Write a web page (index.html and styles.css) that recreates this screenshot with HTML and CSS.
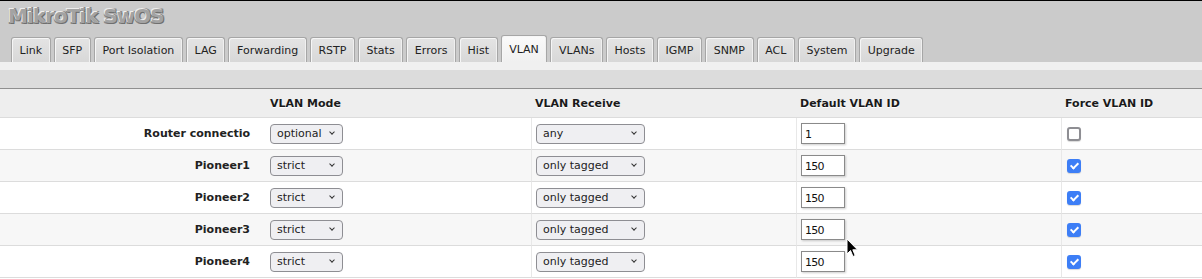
FILE: index.html
```html
<!DOCTYPE html>
<html lang="en">
<head>
    <meta charset="UTF-8">
    <meta name="viewport" content="width=device-width, initial-scale=1.0">
    <title>MikroTik SwOS - VLAN</title>
    <link rel="stylesheet" href="styles.css">
</head>
<body>
    <div class="top">
        <h1 class="logo">MikroTik SwOS</h1>
        <ul class="tabs">
            <li><a href="#">Link</a></li>
            <li><a href="#">SFP</a></li>
            <li><a href="#">Port Isolation</a></li>
            <li><a href="#">LAG</a></li>
            <li><a href="#">Forwarding</a></li>
            <li><a href="#">RSTP</a></li>
            <li><a href="#">Stats</a></li>
            <li><a href="#">Errors</a></li>
            <li><a href="#">Hist</a></li>
            <li class="active"><a href="#">VLAN</a></li>
            <li><a href="#">VLANs</a></li>
            <li><a href="#">Hosts</a></li>
            <li><a href="#">IGMP</a></li>
            <li><a href="#">SNMP</a></li>
            <li><a href="#">ACL</a></li>
            <li><a href="#">System</a></li>
            <li><a href="#">Upgrade</a></li>
        </ul>
    </div>
    <div class="strip"></div>
    <div class="toolbar"></div>

    <table class="grid">
        <colgroup>
            <col class="c-name">
            <col class="c-mode">
            <col class="c-recv">
            <col class="c-id">
            <col>
        </colgroup>
        <thead>
            <tr>
                <th></th>
                <th>VLAN Mode</th>
                <th>VLAN Receive</th>
                <th>Default VLAN ID</th>
                <th>Force VLAN ID</th>
            </tr>
        </thead>
        <tbody>
            <tr>
                <td class="name">Router connectio</td>
                <td><span class="sel mode"><select><option>optional</option><option>strict</option></select></span></td>
                <td><span class="sel recv"><select><option>any</option><option>only tagged</option></select></span></td>
                <td><input type="text" class="vid" value="1"></td>
                <td><input type="checkbox" class="force"></td>
            </tr>
            <tr>
                <td class="name">Pioneer1</td>
                <td><span class="sel mode"><select><option>strict</option></select></span></td>
                <td><span class="sel recv"><select><option>only tagged</option></select></span></td>
                <td><input type="text" class="vid" value="150"></td>
                <td><input type="checkbox" class="force" checked></td>
            </tr>
            <tr>
                <td class="name">Pioneer2</td>
                <td><span class="sel mode"><select><option>strict</option></select></span></td>
                <td><span class="sel recv"><select><option>only tagged</option></select></span></td>
                <td><input type="text" class="vid" value="150"></td>
                <td><input type="checkbox" class="force" checked></td>
            </tr>
            <tr>
                <td class="name">Pioneer3</td>
                <td><span class="sel mode"><select><option>strict</option></select></span></td>
                <td><span class="sel recv"><select><option>only tagged</option></select></span></td>
                <td><input type="text" class="vid" value="150"></td>
                <td><input type="checkbox" class="force" checked></td>
            </tr>
            <tr>
                <td class="name">Pioneer4</td>
                <td><span class="sel mode"><select><option>strict</option></select></span></td>
                <td><span class="sel recv"><select><option>only tagged</option></select></span></td>
                <td><input type="text" class="vid" value="150"></td>
                <td><input type="checkbox" class="force" checked></td>
            </tr>
        </tbody>
    </table>

    <!-- mouse pointer from the screenshot -->
    <svg class="pointer" width="13" height="20" viewBox="0 0 13 20">
        <path d="M1 1 L1 16 L4.5 12.5 L7 18.5 L9.2 17.5 L6.8 11.8 L11.5 11.8 Z" fill="#000" stroke="#fff" stroke-width="1"/>
    </svg>
</body>
</html>
```

FILE: styles.css
```css
* {
    box-sizing: border-box;
}

body {
    margin: 0;
    font-family: "DejaVu Sans", Verdana, sans-serif;
    font-size: 11px;
    color: #222;
    background-color: #fff;
    position: relative;
}

.top {
    background-color: #cbcbcb;
    border-top: 1px solid #000;
    padding-top: 3px;
}

.logo {
    margin: 0;
    padding-left: 8px;
    font-size: 20px;
    line-height: 24px;
    letter-spacing: -1px;
    font-weight: bold;
    color: #a3a3a3;
    text-shadow: -1px -1px 0 #eee, 1px 1px 0 #6f6f6f, 1px -1px 0 #888, -1px 1px 0 #888;
}

.tabs {
    list-style: none;
    margin: 7px 0 0;
    padding: 0 0 0 11px;
    height: 27px;
    display: flex;
    align-items: flex-end;
    gap: 3px;
}

.tabs a {
    display: block;
    height: 25px;
    line-height: 25px;
    padding: 0 7.6px;
    color: #222;
    text-decoration: none;
    border: 1px solid #a6a6a6;
    border-bottom: none;
    border-radius: 3px 3px 0 0;
    background: linear-gradient(#e4e4e4, #d8d8d8);
    box-shadow: inset 1px 1px 0 #f6f6f6, inset -1px 0 0 #f0f0f0;
}

.tabs .active a {
    height: 27px;
    line-height: 28px;
    background: linear-gradient(#fafafa, #f0f0f0);
}

.strip {
    height: 8px;
    background-color: #f0f0f0;
}

.toolbar {
    height: 19px;
    background-color: #dcdcdc;
    border-bottom: 1px solid #8f8f8f;
}

.grid {
    width: 100%;
    table-layout: fixed;
    border-collapse: separate;
    border-spacing: 0;
}

.c-name { width: 266px; }
.c-mode { width: 265px; }
.c-recv { width: 265px; }
.c-id { width: 265px; }

.grid th,
.grid td {
    padding: 0 0 0 4px;
    border-bottom: 1px solid #dcdcdc;
    text-align: left;
    white-space: nowrap;
}

.grid th {
    height: 29px;
    background-color: #eee;
    font-weight: bold;
    color: #1a1a1a;
    text-shadow: 0 1px 0 #fff;
}

.grid td {
    height: 32px;
}

.grid tbody tr:nth-child(even) td {
    background-color: #f7f7f7;
}

.grid td:nth-child(n+3) {
    border-left: 1px solid #e8e8e8;
}

.grid td.name {
    text-align: right;
    padding-right: 16px;
    font-weight: bold;
}

.sel {
    display: inline-block;
    position: relative;
    vertical-align: middle;
}

.sel select {
    appearance: none;
    -webkit-appearance: none;
    height: 20px;
    padding: 0 0 0 6px;
    font-family: inherit;
    font-size: 11px;
    color: #222;
    background-color: #efeff2;
    border: 1px solid #8e8e93;
    border-radius: 4px;
}

.sel::after {
    content: "";
    position: absolute;
    right: 9px;
    top: 6px;
    width: 3px;
    height: 3px;
    border-right: 1.5px solid #333;
    border-bottom: 1.5px solid #333;
    transform: rotate(45deg);
    pointer-events: none;
}

.mode select { width: 73px; }
.recv select { width: 109px; }

.vid {
    width: 44px;
    height: 21px;
    padding: 1px 3px 0;
    font-family: inherit;
    font-size: 11px;
    letter-spacing: -0.8px;
    color: #111;
    border: 1px solid #8a8a8a;
    box-shadow: 1px 1px 2px rgba(0, 0, 0, 0.2);
    vertical-align: middle;
}

.force {
    appearance: none;
    -webkit-appearance: none;
    position: relative;
    width: 14px;
    height: 14px;
    margin: 0 0 0 1px;
    border: 2px solid #8e8e93;
    border-radius: 3px;
    background-color: #fff;
    box-shadow: 0 1px 1px rgba(0, 0, 0, 0.15);
    vertical-align: middle;
}

.force:checked {
    border-color: #3d7ef6;
    background-color: #3d7ef6;
}

.force:checked::after {
    content: "";
    position: absolute;
    left: 3px;
    top: 0;
    width: 3px;
    height: 6px;
    border-right: 2px solid #fff;
    border-bottom: 2px solid #fff;
    transform: rotate(45deg);
}

.pointer {
    position: absolute;
    left: 846px;
    top: 238px;
}
```
